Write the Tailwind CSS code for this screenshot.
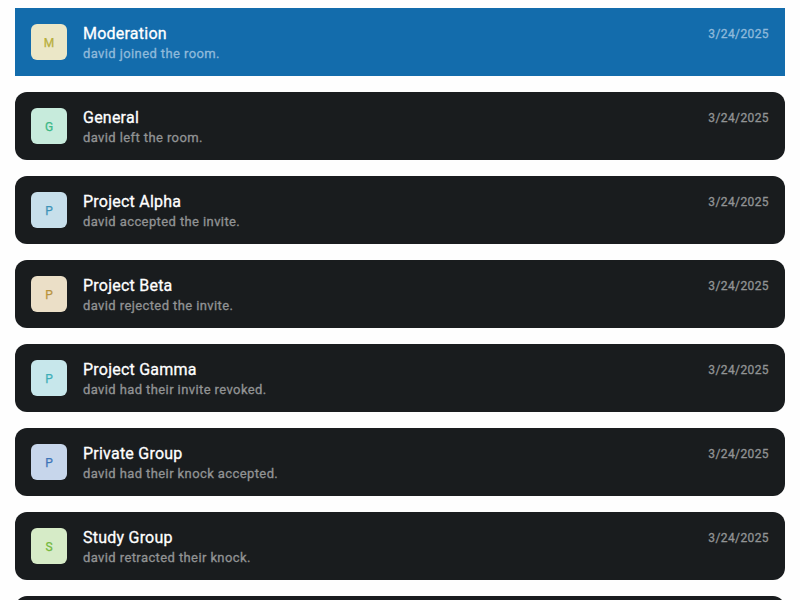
<!DOCTYPE html>
<html lang="en">
<head>
<meta charset="utf-8">
<title>Rooms</title>
<script src="https://cdn.jsdelivr.net/npm/@tailwindcss/browser@4"></script>
</head>
<body class="h-[600px] overflow-hidden bg-[#fefefe] font-[Roboto,sans-serif]">
<ul class="flex flex-col gap-4 px-[15px] pt-2">
  <li class="flex h-[68px] shrink-0 gap-4 bg-[#136cac] p-4">
    <div class="flex size-9 items-center justify-center rounded-md bg-[#ebe7c7] pt-0.5 text-xs text-[#b8ae3c] [-webkit-text-stroke:0.25px]">M</div>
    <div class="flex-1 [-webkit-text-stroke:0.3px]">
      <div class="h-5 text-base leading-[19px] tracking-[0.23px] text-white">Moderation</div>
      <div class="h-5 text-[13px] leading-5 tracking-[0.4px] text-[#8fbadb]">david joined the room.</div>
    </div>
    <time class="pt-0.5 text-xs leading-4 tracking-[0.4px] text-[#8fbadb] [-webkit-text-stroke:0.3px]">3/24/2025</time>
  </li>
  <li class="flex h-[68px] shrink-0 gap-4 rounded-xl bg-[#191c1e] p-4">
    <div class="flex size-9 items-center justify-center rounded-md bg-[#c7ebdc] pt-0.5 text-xs text-[#3cb886] [-webkit-text-stroke:0.25px]">G</div>
    <div class="flex-1 [-webkit-text-stroke:0.3px]">
      <div class="h-5 text-base leading-[19px] tracking-[0.23px] text-white">General</div>
      <div class="h-5 text-[13px] leading-5 tracking-[0.4px] text-[#919394]">david left the room.</div>
    </div>
    <time class="pt-0.5 text-xs leading-4 tracking-[0.4px] text-[#919394] [-webkit-text-stroke:0.3px]">3/24/2025</time>
  </li>
  <li class="flex h-[68px] shrink-0 gap-4 rounded-xl bg-[#191c1e] p-4">
    <div class="flex size-9 items-center justify-center rounded-md bg-[#c7dfeb] pt-0.5 text-xs text-[#3c93b8] [-webkit-text-stroke:0.25px]">P</div>
    <div class="flex-1 [-webkit-text-stroke:0.3px]">
      <div class="h-5 text-base leading-[19px] tracking-[0.23px] text-white">Project Alpha</div>
      <div class="h-5 text-[13px] leading-5 tracking-[0.4px] text-[#919394]">david accepted the invite.</div>
    </div>
    <time class="pt-0.5 text-xs leading-4 tracking-[0.4px] text-[#919394] [-webkit-text-stroke:0.3px]">3/24/2025</time>
  </li>
  <li class="flex h-[68px] shrink-0 gap-4 rounded-xl bg-[#191c1e] p-4">
    <div class="flex size-9 items-center justify-center rounded-md bg-[#ebdfc7] pt-0.5 text-xs text-[#b8933c] [-webkit-text-stroke:0.25px]">P</div>
    <div class="flex-1 [-webkit-text-stroke:0.3px]">
      <div class="h-5 text-base leading-[19px] tracking-[0.23px] text-white">Project Beta</div>
      <div class="h-5 text-[13px] leading-5 tracking-[0.4px] text-[#919394]">david rejected the invite.</div>
    </div>
    <time class="pt-0.5 text-xs leading-4 tracking-[0.4px] text-[#919394] [-webkit-text-stroke:0.3px]">3/24/2025</time>
  </li>
  <li class="flex h-[68px] shrink-0 gap-4 rounded-xl bg-[#191c1e] p-4">
    <div class="flex size-9 items-center justify-center rounded-md bg-[#c7e7eb] pt-0.5 text-xs text-[#3caeb8] [-webkit-text-stroke:0.25px]">P</div>
    <div class="flex-1 [-webkit-text-stroke:0.3px]">
      <div class="h-5 text-base leading-[19px] tracking-[0.23px] text-white">Project Gamma</div>
      <div class="h-5 text-[13px] leading-5 tracking-[0.4px] text-[#919394]">david had their invite revoked.</div>
    </div>
    <time class="pt-0.5 text-xs leading-4 tracking-[0.4px] text-[#919394] [-webkit-text-stroke:0.3px]">3/24/2025</time>
  </li>
  <li class="flex h-[68px] shrink-0 gap-4 rounded-xl bg-[#191c1e] p-4">
    <div class="flex size-9 items-center justify-center rounded-md bg-[#c7d6eb] pt-0.5 text-xs text-[#3c74b8] [-webkit-text-stroke:0.25px]">P</div>
    <div class="flex-1 [-webkit-text-stroke:0.3px]">
      <div class="h-5 text-base leading-[19px] tracking-[0.23px] text-white">Private Group</div>
      <div class="h-5 text-[13px] leading-5 tracking-[0.4px] text-[#919394]">david had their knock accepted.</div>
    </div>
    <time class="pt-0.5 text-xs leading-4 tracking-[0.4px] text-[#919394] [-webkit-text-stroke:0.3px]">3/24/2025</time>
  </li>
  <li class="flex h-[68px] shrink-0 gap-4 rounded-xl bg-[#191c1e] p-4">
    <div class="flex size-9 items-center justify-center rounded-md bg-[#d6ebc7] pt-0.5 text-xs text-[#74b83c] [-webkit-text-stroke:0.25px]">S</div>
    <div class="flex-1 [-webkit-text-stroke:0.3px]">
      <div class="h-5 text-base leading-[19px] tracking-[0.23px] text-white">Study Group</div>
      <div class="h-5 text-[13px] leading-5 tracking-[0.4px] text-[#919394]">david retracted their knock.</div>
    </div>
    <time class="pt-0.5 text-xs leading-4 tracking-[0.4px] text-[#919394] [-webkit-text-stroke:0.3px]">3/24/2025</time>
  </li>
  <li class="h-[68px] shrink-0 rounded-xl bg-[#191c1e]"></li>
</ul>
</body>
</html>
